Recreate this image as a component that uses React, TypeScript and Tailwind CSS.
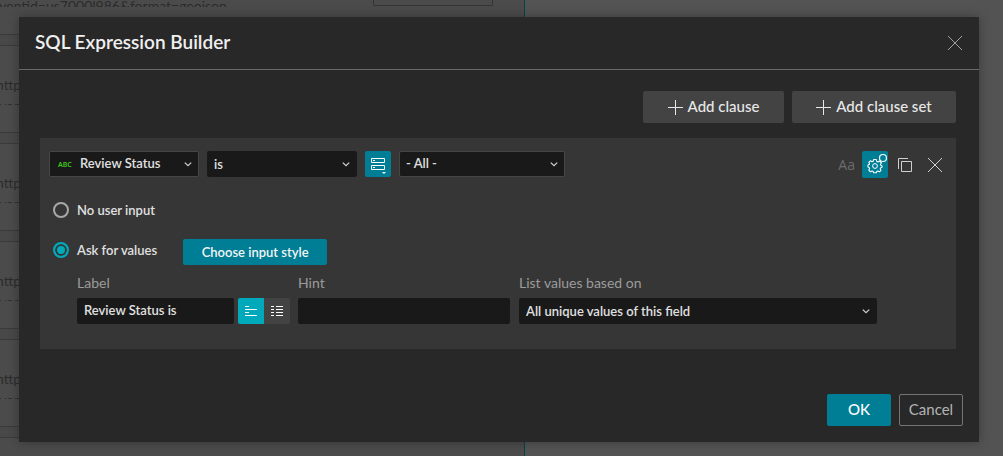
import type { ReactNode } from 'react';

const cards = [1, 2, 3, 4];

function Chevron() {
  return (
    <svg
      className="pointer-events-none absolute right-[7px] top-[10px] text-[#cfcfcf]"
      width="8"
      height="7"
      viewBox="0 0 8 7"
      fill="none"
      stroke="currentColor"
      strokeWidth="1.3"
    >
      <path d="M0.8 1.6 L4 4.6 L7.2 1.6" />
    </svg>
  );
}

function Cross() {
  return (
    <svg width="16" height="16" viewBox="0 0 16 16" fill="none" stroke="currentColor">
      <path d="M1 1 L15 15 M15 1 L1 15" />
    </svg>
  );
}

function Plus() {
  return (
    <svg width="15" height="15" viewBox="0 0 15 15" fill="none" stroke="currentColor">
      <path d="M7.5 0 V15 M0 7.5 H15" />
    </svg>
  );
}

type DropDownProps = {
  id?: string;
  label?: string;
  value: string;
  className: string;
  selectClass: string;
  children?: ReactNode;
};

function DropDown({ id, label, value, className, selectClass, children }: DropDownProps) {
  return (
    <div className={`relative h-[26px] ${className}`}>
      {children}
      <select
        id={id}
        aria-label={label}
        defaultValue={value}
        className={`block h-full w-full appearance-none rounded-xs bg-[#191919] pr-5 text-[13px] leading-5 font-semibold text-[#e0e0e0] ${selectClass}`}
      >
        <option>{value}</option>
      </select>
      <Chevron />
    </div>
  );
}

function Backdrop() {
  return (
    <div className="absolute inset-0 flex overflow-hidden bg-[#535353]" aria-hidden="true">
      <div className="w-[525px] shrink-0 border-r border-[#00454c] bg-[#484848] text-sm text-[#2b2b2b]">
        <div className="flex h-[35px] items-start justify-between border-b border-[#3a3a3a] bg-[#4b4b4b] pr-[31px]">
          <div className="h-[7px] overflow-hidden">
            <p className="-mt-1 -ml-2 leading-5">eventid=us7000l986&amp;format=geojson</p>
          </div>
          <div className="h-[6px] w-[120px] rounded-b-xs border border-t-0 border-[#343434]" />
        </div>
        {cards.map((card) => (
          <div key={card} className="mt-[10px] h-[88px] border-y border-[#3a3a3a] bg-[#4b4b4b] pt-[29px]">
            <p className="-ml-1 leading-5">http://</p>
            <div className="h-[10px] overflow-hidden">
              <p className="-ml-2 pt-[3px] leading-4">eventid</p>
            </div>
          </div>
        ))}
        <div className="mt-[10px] h-[88px] border-y border-[#3a3a3a] bg-[#4b4b4b]" />
      </div>
    </div>
  );
}

function ClauseRow() {
  return (
    <div className="flex items-start justify-between pl-[9px] pr-[13px]">
      <div className="flex gap-2">
        <DropDown
          label="Field"
          value="Review Status"
          className="w-[150px]"
          selectClass="border border-[#464646] pl-[30px] pb-[2px]"
        >
          <span className="pointer-events-none absolute left-[9px] top-[8px] font-['Noto_Sans',sans-serif] text-[7px] leading-[11px] font-semibold text-[#3ec41a]">
            ABC
          </span>
        </DropDown>
        <DropDown label="Operator" value="is" className="w-[150px]" selectClass="pl-[7px]" />
        <button
          type="button"
          aria-label="Value source"
          className="flex h-[26px] w-[26px] items-center justify-center rounded-xs bg-[#007e95] text-white"
        >
          <svg width="26" height="26" viewBox="0 0 26 26" fill="none" stroke="currentColor">
            <path d="M6.5 7.5 H19.5 V11.5 H6.5 Z M6.5 14.5 H19.5 V18.5 H6.5 Z M8 9.5 H10 M8 16.5 H10" />
            <path d="M17 21 H21 L19 23 Z" fill="currentColor" stroke="none" />
          </svg>
        </button>
        <DropDown
          label="Value"
          value="- All -"
          className="w-[166px]"
          selectClass="border border-[#464646] pl-[6px] pb-[2px]"
        />
      </div>
      <div className="flex items-center text-[#d0d0d0]">
        <button type="button" aria-label="Match case" className="pr-[7px] font-['Open_Sans',sans-serif] text-sm leading-5 font-normal text-[#6c6c6c]">
          Aa
        </button>
        <button
          type="button"
          aria-label="Input settings"
          className="flex h-[27px] w-[26px] items-center justify-center rounded-xs bg-[#007e95] text-white"
        >
          <svg width="26" height="26" viewBox="0 0 26 26" fill="none" stroke="currentColor">
            <path
              strokeLinejoin="round"
              strokeWidth="1.1"
              d="M11.7 7.5 H14.3 L14.7 9.3 L15.9 9.9 L17.6 9 L19.4 10.9 L18.4 12.5 L18.8 13.3 L20 13.7 V15.3 L18.8 15.7 L18.2 16.7 L19 18.2 L17.6 19.8 L15.9 19 L14.7 19.6 L14.3 20.8 H11.7 L11.3 19.6 L10.1 19 L8.4 19.8 L6.8 18.2 L7.6 16.5 L7.1 15.4 L6 15 V13 L7.1 12.6 L7.6 11.8 L6.8 10.3 L8.4 8.8 L10.1 9.7 L11.3 9.1 Z"
            />
            <circle cx="13" cy="14" r="2.4" />
            <circle cx="21" cy="6" r="3.5" fill="#007e95" strokeWidth="1.2" />
          </svg>
        </button>
        <button type="button" aria-label="Duplicate clause" className="ml-[10px]">
          <svg width="14" height="14" viewBox="0 0 14 14" fill="none" stroke="currentColor">
            <path d="M3.5 3.5 H13.5 V13.5 H3.5 Z M0.5 11 V0.5 H10" />
          </svg>
        </button>
        <button type="button" aria-label="Remove clause" className="ml-[15px]">
          <Cross />
        </button>
      </div>
    </div>
  );
}

const radioClass =
  'h-4 w-4 shrink-0 appearance-none rounded-full border-2 border-[#a8a8a8] checked:border-[#00aabb] checked:bg-[#00aabb] checked:shadow-[inset_0_0_0_2px_#363636]';

export default function App() {
  return (
    <div className="relative flex min-h-screen items-start bg-[#535353] pt-[17px] pr-6 pb-[14px] pl-[19px] font-[Lato,'Noto_Sans',sans-serif]">
      <Backdrop />
      <div
        role="dialog"
        aria-labelledby="builder-title"
        className="relative min-w-0 flex-1 bg-[#282828] shadow-[0_0_10px_rgba(0,0,0,0.3)]"
      >
        <header className="flex h-[53px] items-center justify-between border-b border-[#6a6a6a] px-4">
          <h1 id="builder-title" className="pb-[2px] text-[19px] leading-6 font-semibold text-[#f0f0f0]">
            SQL Expression Builder
          </h1>
          <button type="button" aria-label="Close" className="text-[#a0a0a0]">
            <Cross />
          </button>
        </header>

        <div className="pt-[21px] pr-[23px] pl-[21px]">
          <div className="flex justify-end gap-2 text-[15px] leading-5 font-medium text-[#e8e8e8]">
            <button type="button" className="flex h-8 w-[141px] items-center justify-center gap-[5px] rounded-xs bg-[#434343]">
              <Plus />
              <span className="pb-[2px]">Add clause</span>
            </button>
            <button type="button" className="flex h-8 w-[164px] items-center justify-center gap-[5px] rounded-xs bg-[#434343]">
              <Plus />
              <span className="pb-[2px]">Add clause set</span>
            </button>
          </div>

          <section className="mt-[15px] bg-[#363636] pt-[13px] pb-[25px] text-[13px] leading-5 font-semibold text-[#e0e0e0]">
            <ClauseRow />
            <div className="pl-[13px]">
              <label className="mt-[22px] flex h-5 w-fit items-center gap-2">
                <input type="radio" name="input-mode" className={radioClass} />
                No user input
              </label>
              <div className="mt-[19px] flex h-[26px] items-start gap-[26px]">
                <label className="flex h-[22px] items-center gap-2">
                  <input type="radio" name="input-mode" defaultChecked className={radioClass} />
                  Ask for values
                </label>
                <button type="button" className="h-[26px] w-36 rounded-xs bg-[#007e95] text-[#f4f4f4]">
                  Choose input style
                </button>
              </div>
            </div>
            <div className="mt-2 flex pl-[37px]">
              <div>
                <label htmlFor="prompt-label" className="block text-sm leading-5 font-normal text-[#9c9c9c]">
                  Label
                </label>
                <div className="mt-[5px] flex">
                  <input
                    id="prompt-label"
                    type="text"
                    defaultValue="Review Status is"
                    className="h-[26px] w-[157px] rounded-xs bg-[#191919] px-[7px] pb-[2px]"
                  />
                  <button type="button" aria-label="Single line" className="ml-1 rounded-l-xs bg-[#00aabb] text-white">
                    <svg width="26" height="26" viewBox="0 0 26 26" stroke="currentColor">
                      <path d="M7 8.5 H11 M7 11.5 H19 M7 14.5 H11 M7 17.5 H19" />
                    </svg>
                  </button>
                  <button type="button" aria-label="List" className="rounded-r-xs bg-[#434343] text-white">
                    <svg width="26" height="26" viewBox="0 0 26 26" stroke="currentColor">
                      <path d="M7 8.5 H10 M12 8.5 H19 M7 11.5 H10 M12 11.5 H19 M7 14.5 H10 M12 14.5 H19 M7 17.5 H10 M12 17.5 H19" />
                    </svg>
                  </button>
                </div>
              </div>
              <div className="ml-2">
                <label htmlFor="prompt-hint" className="block text-sm leading-5 font-normal text-[#9c9c9c]">
                  Hint
                </label>
                <input id="prompt-hint" type="text" className="mt-[5px] block h-[26px] w-[212px] rounded-xs bg-[#191919] px-[7px]" />
              </div>
              <div className="ml-[9px]">
                <label htmlFor="values-source" className="block text-sm leading-5 font-normal text-[#9c9c9c]">
                  List values based on
                </label>
                <DropDown
                  id="values-source"
                  value="All unique values of this field"
                  className="mt-[5px] w-[358px]"
                  selectClass="pl-[7px]"
                />
              </div>
            </div>
          </section>
        </div>

        <footer className="flex justify-end gap-2 pt-[45px] pr-4 pb-4 text-[15px] leading-5">
          <button type="button" className="h-8 w-16 rounded-xs bg-[#007e95] pb-[2px] font-medium text-white">
            OK
          </button>
          <button type="button" className="h-8 w-16 rounded-xs border border-[#757575] pb-[2px] text-[#b5b5b5]">
            Cancel
          </button>
        </footer>
      </div>
    </div>
  );
}
